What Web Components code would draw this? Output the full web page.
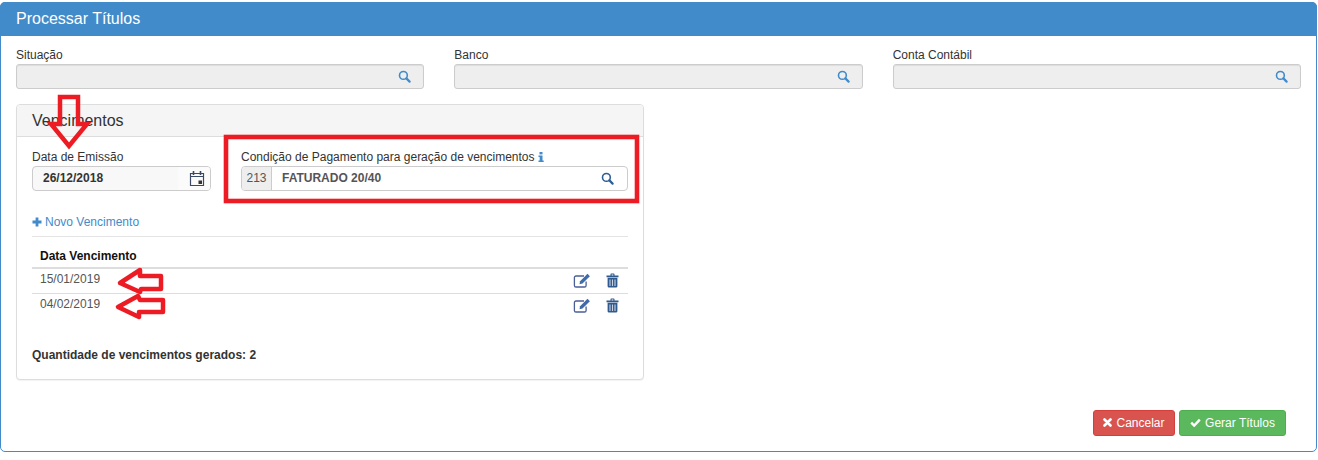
<!DOCTYPE html>
<html lang="pt-BR">
<head>
<meta charset="utf-8">
<title>Processar Títulos</title>
<style>
    html, body { margin: 0; padding: 0; background: #fff; }
    body { font: 12px "Liberation Sans", Arial, sans-serif; color: #333; position: relative; height: 460px; overflow: hidden; }
</style>
</head>
<body>
<titulos-page></titulos-page>

<script>
// Icons
const SEARCH_ICON = `<svg width="13" height="13" viewBox="0 0 13 13" fill="none" stroke="currentColor"><circle cx="5.4" cy="5.4" r="3.9" stroke-width="1.6"/><path d="M8.4 8.4l3.2 3.2" stroke-width="2.2" stroke-linecap="round"/></svg>`;

// Lookup Field Component
class LookupField extends HTMLElement {
    constructor() {
        super();
        this.attachShadow({ mode: 'open' });
    }

    connectedCallback() {
        const label = this.getAttribute('label') || '';
        this.shadowRoot.innerHTML = /*css */ `
            <style>
                :host { display: block; }
                label { display: block; height: 16px; line-height: 16px; margin-bottom: 1px; color: #333; font-size: 12px; }
                .box {
                    height: 25px; box-sizing: border-box;
                    background: #eee; border: 1px solid #ccc; border-radius: 3px;
                    display: flex; align-items: center; justify-content: flex-end;
                    padding-right: 12px; color: #428bca;
                    box-shadow: inset 0 1px 1px rgba(0,0,0,.075);
                }
                svg { display: block; }
            </style>
            <label>${label}</label>
            <div class="box">${SEARCH_ICON}</div>
        `;
    }
}

// Sub panel with a title
class TitledPanel extends HTMLElement {
    constructor() {
        super();
        this.attachShadow({ mode: 'open' });
    }

    connectedCallback() {
        this.shadowRoot.innerHTML = /*css */ `
            <style>
                :host {
                    display: block; box-sizing: border-box; width: 628px; height: 276px;
                    border: 1px solid #ddd; border-radius: 4px; background: #fff;
                    box-shadow: 0 1px 1px rgba(0,0,0,.05);
                }
                header {
                    height: 32px; box-sizing: border-box; padding: 0 15px;
                    background: #f5f5f5; border-bottom: 1px solid #ddd;
                    border-radius: 3px 3px 0 0;
                    font-size: 16px; line-height: 31px; color: #333;
                }
                .body { padding: 12px 15px 0; }
            </style>
            <header>${this.getAttribute('heading') || ''}</header>
            <div class="body"><slot></slot></div>
        `;
    }
}

// Date input with calendar addon
class DateField extends HTMLElement {
    constructor() {
        super();
        this.attachShadow({ mode: 'open' });
    }

    connectedCallback() {
        this.shadowRoot.innerHTML = /*css */ `
            <style>
                :host { display: block; }
                label { display: block; height: 16px; line-height: 16px; margin-bottom: 1px; font-size: 12px; color: #333; }
                .box {
                    height: 25px; box-sizing: border-box; display: flex;
                    border: 1px solid #ccc; border-radius: 4px; overflow: hidden;
                    background: #f8f8f8;
                }
                .value { flex: 1; padding-left: 10px; line-height: 22px; font-weight: bold; color: #333; }
                .addon {
                    width: 32px; box-sizing: border-box; padding-left: 11px; background: #fbfbfb;
                    display: flex; align-items: center; justify-content: flex-start;
                }
                svg { display: block; }
            </style>
            <label>${this.getAttribute('label') || ''}</label>
            <div class="box">
                <span class="value">${this.getAttribute('value') || ''}</span>
                <span class="addon">
                    <svg width="16" height="17" viewBox="0 0 16 17" fill="none">
                        <path d="M1.5 3.5h13v12h-13zM1.5 6.5h13" stroke="#3a4a66" stroke-width="1.2"/>
                        <path d="M4.5 1v4M11.5 1v4" stroke="#3a4a66" stroke-width="1.6"/>
                        <rect x="9.5" y="10.5" width="3.5" height="3.5" fill="#333"/>
                    </svg>
                </span>
            </div>
        `;
    }
}

// Code + description lookup
class CodeLookup extends HTMLElement {
    constructor() {
        super();
        this.attachShadow({ mode: 'open' });
    }

    connectedCallback() {
        this.shadowRoot.innerHTML = /*css */ `
            <style>
                :host { display: block; }
                label { display: flex; align-items: center; gap: 3px; height: 16px; line-height: 16px; margin-bottom: 1px; font-size: 12px; color: #333; }
                label svg { display: block; }
                .box {
                    height: 25px; box-sizing: border-box; display: flex; align-items: stretch;
                    border: 1px solid #ccc; border-radius: 4px; overflow: hidden; background: #fff;
                }
                .code {
                    width: 30px; box-sizing: border-box; background: #eee; border-right: 1px solid #ccc;
                    text-align: center; line-height: 22px; color: #555;
                }
                .desc { flex: 1; padding-left: 10px; line-height: 23px; font-weight: bold; color: #555; }
                .search { width: 40px; display: flex; align-items: center; justify-content: center; color: #2f5f94; }
            </style>
            <label>${this.getAttribute('label') || ''}
                <svg width="6" height="10" viewBox="0 0 6 10" fill="#428bca"><rect x="1.5" y="0" width="3" height="2.4"/><path d="M0.5 3.6h4v5h1.2V10H0.5V8.6h1.2V5H0.5z"/></svg>
            </label>
            <div class="box">
                <span class="code">${this.getAttribute('code') || ''}</span>
                <span class="desc">${this.getAttribute('text') || ''}</span>
                <span class="search">${SEARCH_ICON}</span>
            </div>
        `;
    }
}

// Due dates table
class DueTable extends HTMLElement {
    constructor() {
        super();
        this.attachShadow({ mode: 'open' });
    }

    connectedCallback() {
        const rows = (this.getAttribute('dates') || '').split(',');
        this.shadowRoot.innerHTML = /*css */ `
            <style>
                :host { display: block; }
                .head {
                    height: 32px; box-sizing: border-box; padding: 11px 8px 0;
                    border-bottom: 2px solid #ddd; line-height: 16px;
                    font-weight: bold; color: #111;
                }
                .row {
                    height: 25px; box-sizing: border-box; display: flex; align-items: center;
                    justify-content: space-between; padding: 0 9px 1px 8px; color: #555;
                    border-bottom: 1px solid #ddd;
                }
                .row > span:first-child { margin-bottom: 4px; }
                .row:last-child { border-bottom-color: transparent; }
                .actions { display: flex; gap: 15px; align-items: center; margin-bottom: 1px; }
                svg { display: block; }
            </style>
            <div class="head">Data Vencimento</div>
            ${rows.map((date) => `
                <div class="row">
                    <span>${date}</span>
                    <span class="actions">
                        <svg width="18" height="15" viewBox="0 0 18 15" fill="none">
                            <path d="M11 3H3a1.6 1.6 0 0 0-1.6 1.6v7.8A1.6 1.6 0 0 0 3 14h8.5a1.6 1.6 0 0 0 1.6-1.6V8.5" stroke="#4a5f96" stroke-width="1.3"/>
                            <path d="M14.5 .8l2.4 2.4-7.4 7.4-3 .6.6-3z" fill="#3f6ca8"/>
                        </svg>
                        <svg width="13" height="15" viewBox="0 0 13 15">
                            <path d="M.5 2.6h12v1.6H.5zM4.5 2.6V1.2a.8.8 0 0 1 .8-.8h2.4a.8.8 0 0 1 .8.8v1.4H7.4V1.6H5.6v1z" fill="#2f5a8f"/>
                            <path d="M1.6 4.8h9.8v8.4a1.4 1.4 0 0 1-1.4 1.4H3a1.4 1.4 0 0 1-1.4-1.4z" fill="#2f5a8f"/>
                            <path d="M4 6.4v6.6M6.5 6.4v6.6M9 6.4v6.6" stroke="#c9d3e2" stroke-width="1.1"/>
                        </svg>
                    </span>
                </div>
            `).join('')}
        `;
    }
}

// Action button
class ActionButton extends HTMLElement {
    constructor() {
        super();
        this.attachShadow({ mode: 'open' });
    }

    connectedCallback() {
        const danger = this.getAttribute('kind') === 'danger';
        const icon = danger
            ? `<svg width="9" height="9" viewBox="0 0 9 9"><path d="M1.5 1.5l6 6M7.5 1.5l-6 6" stroke="#fff" stroke-width="2.6" stroke-linecap="round"/></svg>`
            : `<svg width="11" height="9" viewBox="0 0 11 9" fill="none"><path d="M1.2 4.6l3 3 5.6-6" stroke="#fff" stroke-width="2.4"/></svg>`;
        this.shadowRoot.innerHTML = /*css */ `
            <style>
                :host {
                    display: flex; align-items: center; justify-content: center; gap: 4px;
                    box-sizing: border-box; height: 26px; border-radius: 3px; cursor: pointer;
                    color: #fff; font-size: 12px; padding-bottom: 1px;
                    background: ${danger ? '#d9534f' : '#5cb85c'};
                    border: 1px solid ${danger ? '#d43f3a' : '#4cae4c'};
                    width: ${danger ? '82px' : '107px'};
                }
                svg { display: block; }
            </style>
            ${icon}<slot></slot>
        `;
    }
}

// Red marks painted over the screenshot
class AnnotationLayer extends HTMLElement {
    constructor() {
        super();
        this.attachShadow({ mode: 'open' });
    }

    connectedCallback() {
        this.shadowRoot.innerHTML = /*css */ `
            <style>
                :host { position: absolute; left: 0; top: 0; width: 1318px; height: 460px; pointer-events: none; }
                svg { display: block; }
            </style>
            <svg width="1318" height="460" fill="none" stroke="#ed1c24" stroke-width="4.5">
                <rect x="226" y="137" width="411" height="64" stroke-width="4.6"/>
                <path d="M60 124V97h18v27h9L69 146 51 124z" stroke-linejoin="miter"/>
                <path d="M161 276h-21v-6l-20 13 20 9 1-3h20z" stroke-linejoin="round"/>
                <path d="M163 300h-23l-2-4-20 11 21 10v-5h24z" stroke-linejoin="round"/>
            </svg>
        `;
    }
}

// Page
class TitulosPage extends HTMLElement {
    constructor() {
        super();
        this.attachShadow({ mode: 'open' });
    }

    connectedCallback() {
        this.shadowRoot.innerHTML = /*css */ `
            <style>
                :host {
                    display: flex; flex-direction: column; box-sizing: border-box;
                    width: 1317px; height: 450px; margin-top: 2px;
                    border: 1px solid #428bca; border-radius: 5px; background: #fff;
                }
                .title {
                    height: 34px; box-sizing: border-box; margin: -1px -1px 0;
                    background: #428bca; color: #fff; border-radius: 5px 5px 0 0;
                    padding: 0 16px; font-size: 16px; line-height: 34px;
                }
                .content { flex: 1; padding: 11px 15px 0; display: flex; flex-direction: column; }
                .filters { display: grid; grid-template-columns: repeat(3, 1fr); gap: 30px; }
                titled-panel { margin-top: 15px; }
                .top { display: grid; grid-template-columns: 179px 387px; gap: 30px; }
                .new {
                    display: flex; align-items: center; gap: 3px; height: 16px;
                    margin-top: 23px; color: #428bca; font-size: 12px;
                }
                .new svg { display: block; }
                hr { border: 0; border-top: 1px solid #e4e4e4; margin: 6px 0 0; }
                .count { margin-top: 28px; line-height: 16px; font-weight: bold; color: #333; }
                .foot {
                    display: flex; justify-content: flex-end; gap: 4px;
                    padding: 0 15px 15px 0; margin-top: auto;
                }
            </style>
            <div class="title">Processar Títulos</div>
            <div class="content">
                <div class="filters">
                    <lookup-field label="Situação"></lookup-field>
                    <lookup-field label="Banco"></lookup-field>
                    <lookup-field label="Conta Contábil"></lookup-field>
                </div>
                <titled-panel heading="Vencimentos">
                    <div class="top">
                        <date-field label="Data de Emissão" value="26/12/2018"></date-field>
                        <code-lookup label="Condição de Pagamento para geração de vencimentos" code="213" text="FATURADO 20/40"></code-lookup>
                    </div>
                    <div class="new">
                        <svg width="10" height="10" viewBox="0 0 10 10" fill="#428bca"><path d="M3.6 .5h2.8v3.1h3.1v2.8H6.4v3.1H3.6V6.4H.5V3.6h3.1z"/></svg>
                        Novo Vencimento
                    </div>
                    <hr>
                    <due-table dates="15/01/2019,04/02/2019"></due-table>
                    <div class="count">Quantidade de vencimentos gerados: 2</div>
                </titled-panel>
                <div class="foot">
                    <action-button kind="danger">Cancelar</action-button>
                    <action-button kind="success">Gerar Títulos</action-button>
                </div>
            </div>
            <annotation-layer></annotation-layer>
        `;
    }
}

customElements.define('lookup-field', LookupField);
customElements.define('titled-panel', TitledPanel);
customElements.define('date-field', DateField);
customElements.define('code-lookup', CodeLookup);
customElements.define('due-table', DueTable);
customElements.define('action-button', ActionButton);
customElements.define('annotation-layer', AnnotationLayer);
customElements.define('titulos-page', TitulosPage);
</script>
</body>
</html>
